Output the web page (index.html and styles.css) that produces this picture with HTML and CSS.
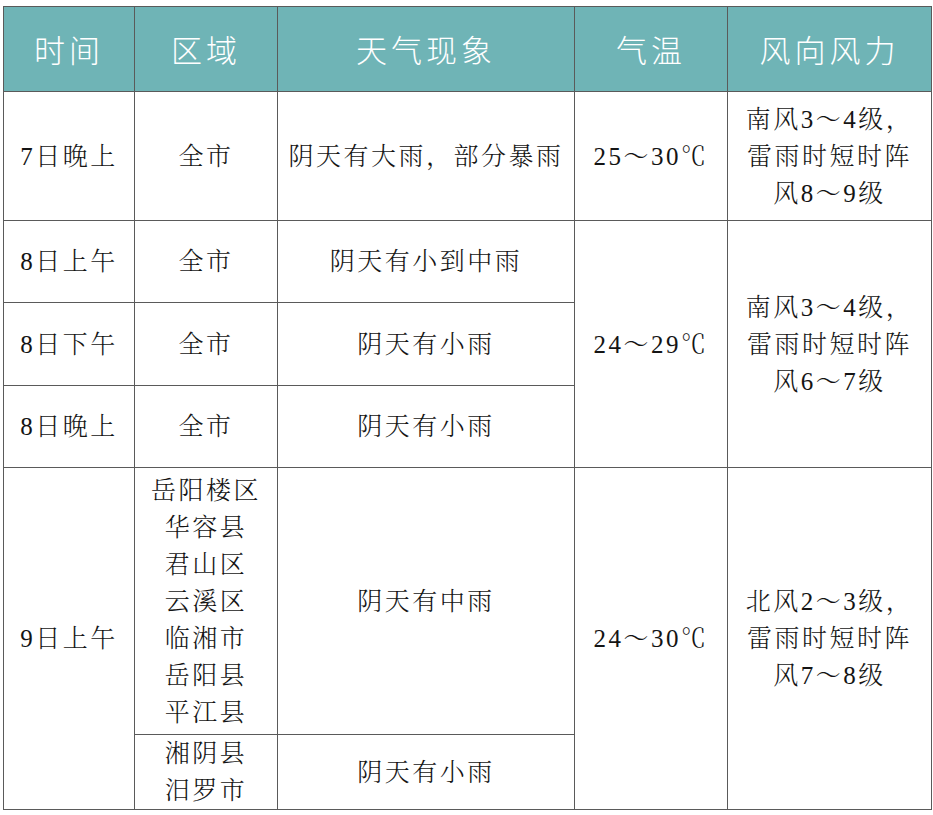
FILE: index.html
```html
<!DOCTYPE html>
<html lang="zh">
<head>
<meta charset="utf-8">
<link rel="stylesheet" href="styles.css">
</head>
<body>
<table class="wx">
  <colgroup>
    <col class="c1"><col class="c2"><col class="c3"><col class="c4"><col class="c5">
  </colgroup>
  <thead>
    <tr class="rh">
      <th>时间</th><th>区域</th><th>天气现象</th><th>气温</th><th>风向风力</th>
    </tr>
  </thead>
  <tbody>
    <tr class="r1">
      <td>7日晚上</td><td>全市</td><td>阴天有大雨，部分暴雨</td><td>25～30℃</td>
      <td>南风3～4级，<br>雷雨时短时阵<br>风8～9级</td>
    </tr>
    <tr class="r2">
      <td>8日上午</td><td>全市</td><td>阴天有小到中雨</td>
      <td rowspan="3">24～29℃</td>
      <td rowspan="3">南风3～4级，<br>雷雨时短时阵<br>风6～7级</td>
    </tr>
    <tr class="r3">
      <td>8日下午</td><td>全市</td><td>阴天有小雨</td>
    </tr>
    <tr class="r4">
      <td>8日晚上</td><td>全市</td><td>阴天有小雨</td>
    </tr>
    <tr class="r5">
      <td rowspan="2">9日上午</td>
      <td>岳阳楼区<br>华容县<br>君山区<br>云溪区<br>临湘市<br>岳阳县<br>平江县</td>
      <td>阴天有中雨</td>
      <td rowspan="2">24～30℃</td>
      <td rowspan="2">北风2～3级，<br>雷雨时短时阵<br>风7～8级</td>
    </tr>
    <tr class="r6">
      <td>湘阴县<br>汨罗市</td><td>阴天有小雨</td>
    </tr>
  </tbody>
</table>
</body>
</html>
```
FILE: styles.css
```css
html, body {
  margin: 0;
  padding: 0;
  background: #ffffff;
}
.wx {
  margin: 6px 0 0 3px;
  width: 928px;
  border-collapse: collapse;
  table-layout: fixed;
  font-family: "Liberation Serif", "Noto Serif CJK SC", "Noto Sans CJK SC", serif;
  color: #141414;
}
.c1 { width: 131px; }
.c2 { width: 143px; }
.c3 { width: 297px; }
.c4 { width: 153px; }
.c5 { width: 204px; }
.wx th, .wx td {
  border: 1.5px solid #5a5a5a;
  text-align: center;
  vertical-align: middle;
  padding: 0;
}
.wx th {
  background: #6fb4b6;
  color: #ffffff;
  font-family: "Noto Sans CJK SC", sans-serif;
  font-weight: 300;
  font-size: 31px;
  letter-spacing: 4px;
  line-height: 40px;
}
.wx td {
  font-size: 25px;
  letter-spacing: 2.5px;
  line-height: 37px;
  font-weight: 300;
}
.rh { height: 85px; }
.r1 { height: 129px; }
.r2 { height: 82px; }
.r3 { height: 83px; }
.r4 { height: 82px; }
.r5 { height: 267px; }
.r6 { height: 75px; }
```
